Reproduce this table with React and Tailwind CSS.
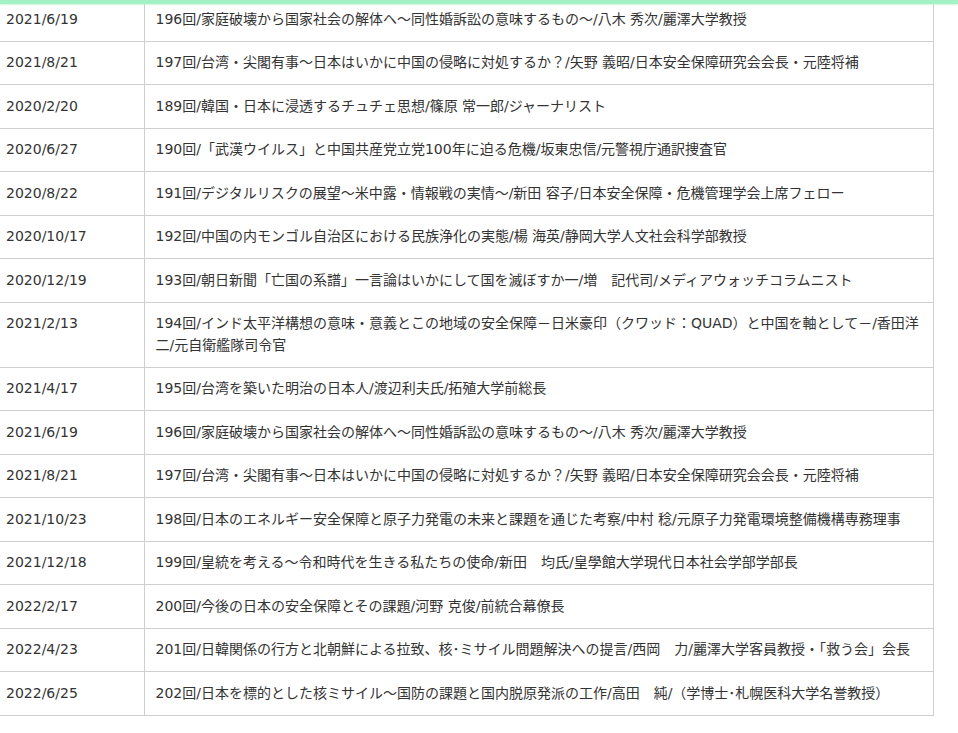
const rows = [
  ['2021/6/19', '196回/家庭破壊から国家社会の解体へ～同性婚訴訟の意味するもの～/八木 秀次/麗澤大学教授'],
  ['2021/8/21', '197回/台湾・尖閣有事～日本はいかに中国の侵略に対処するか？/矢野 義昭/日本安全保障研究会会長・元陸将補'],
  ['2020/2/20', '189回/韓国・日本に浸透するチュチェ思想/篠原 常一郎/ジャーナリスト'],
  ['2020/6/27', '190回/「武漢ウイルス」と中国共産党立党100年に迫る危機/坂東忠信/元警視庁通訳捜査官'],
  ['2020/8/22', '191回/デジタルリスクの展望～米中露・情報戦の実情～/新田 容子/日本安全保障・危機管理学会上席フェロー'],
  ['2020/10/17', '192回/中国の内モンゴル自治区における民族浄化の実態/楊 海英/静岡大学人文社会科学部教授'],
  ['2020/12/19', '193回/朝日新聞「亡国の系譜」一言論はいかにして国を滅ぼすか一/増　記代司/メディアウォッチコラムニスト'],
  ['2021/2/13', '194回/インド太平洋構想の意味・意義とこの地域の安全保障－日米豪印（クワッド：QUAD）と中国を軸として－/香田洋二/元自衛艦隊司令官'],
  ['2021/4/17', '195回/台湾を築いた明治の日本人/渡辺利夫氏/拓殖大学前総長'],
  ['2021/6/19', '196回/家庭破壊から国家社会の解体へ～同性婚訴訟の意味するもの～/八木 秀次/麗澤大学教授'],
  ['2021/8/21', '197回/台湾・尖閣有事～日本はいかに中国の侵略に対処するか？/矢野 義昭/日本安全保障研究会会長・元陸将補'],
  ['2021/10/23', '198回/日本のエネルギー安全保障と原子力発電の未来と課題を通じた考察/中村 稔/元原子力発電環境整備機構専務理事'],
  ['2021/12/18', '199回/皇統を考える～令和時代を生きる私たちの使命/新田　均氏/皇學館大学現代日本社会学部学部長'],
  ['2022/2/17', '200回/今後の日本の安全保障とその課題/河野 克俊/前統合幕僚長'],
  ['2022/4/23', '201回/日韓関係の行方と北朝鮮による拉致、核･ミサイル問題解決への提言/西岡　力/麗澤大学客員教授・「救う会」会長'],
  ['2022/6/25', '202回/日本を標的とした核ミサイル～国防の課題と国内脱原発派の工作/高田　純/（学博士･札幌医科大学名誉教授）'],
];

export default function App() {
  return (
    <div className="relative min-h-[733px] bg-white overflow-hidden text-[14px] text-[#333] font-['DejaVu_Sans','Noto_Sans_CJK_JP',sans-serif]">
      <div className="absolute top-0 left-0 right-0 h-[4px] bg-[#a3f2c6] shadow-[0_1px_2px_rgba(163,242,198,0.6)]" />
      <table className="-mt-[2px] w-[934px] border-collapse">
        <tbody>
          {rows.map((r, i) => (
            <tr key={i} className="border-b border-[#cfcfcf]">
              <td className="w-[144px] align-top pl-[6px] pr-2 py-[10.5px] leading-[21.5px] border-r border-[#cfcfcf]">
                {r[0]}
              </td>
              <td className="align-top pl-[11px] pr-[11px] py-[10.5px] leading-[21.5px] border-r border-[#cfcfcf]">
                {r[1]}
              </td>
            </tr>
          ))}
        </tbody>
      </table>
    </div>
  );
}
